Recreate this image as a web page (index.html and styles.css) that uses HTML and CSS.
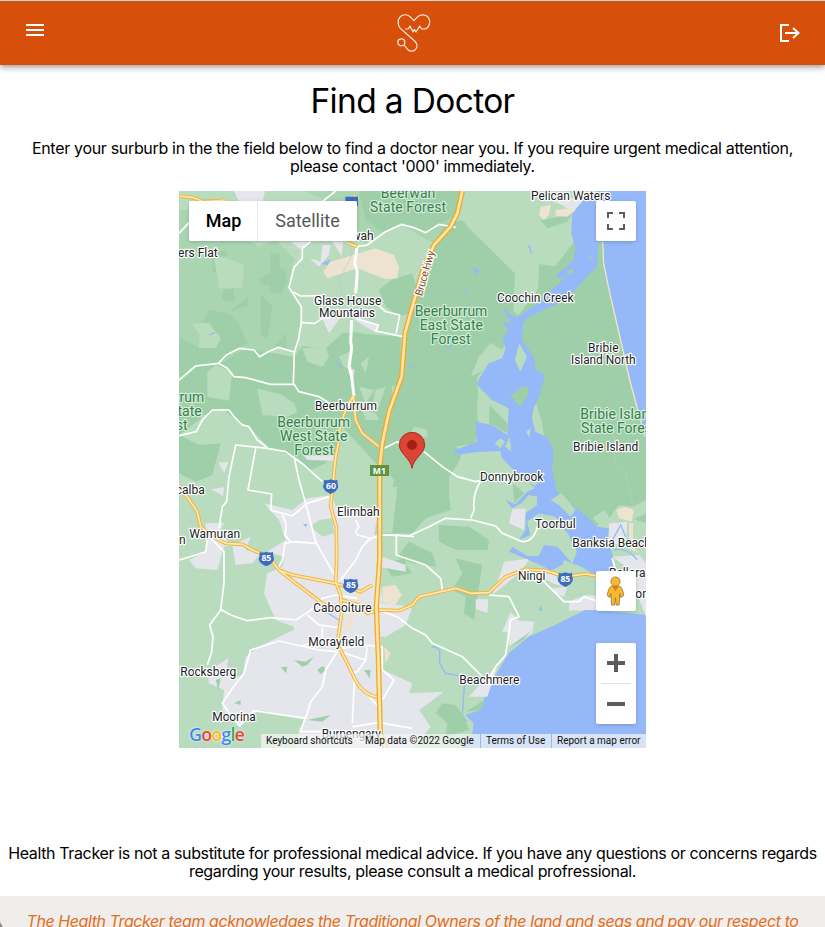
FILE: index.html
```html
<!DOCTYPE html>
<html lang="en">
<head>
<meta charset="utf-8">
<title>Health Tracker</title>
<link rel="stylesheet" href="styles.css">
</head>
<body>
<header class="bar">
  <svg class="menu" viewBox="0 0 24 24"><path d="M3 18h18v-2H3zm0-5h18v-2H3zm0-7v2h18V6z"/></svg>
  <svg class="logo" viewBox="80 40 102 120"><path d="M104 88H114L119 79L128 97L132 89L137 97L148 79L154 88H165C177 83 181 67 176 57C169 43 150 42 140 53L131 63L119 51C111 43 96 43 88 53C81 62 82 77 90 86L133 124C141 132 143 144 134 151C126 157 116 155 112 149L102 137"/><circle cx="93" cy="128" r="10.5"/></svg>
  <svg class="logout" viewBox="0 0 24 24"><path d="M11 4H3V20H11M7 12H20M15 7L20.5 12L15 17"/></svg>
</header>
<main class="main">
  <h1 class="title">Find a Doctor</h1>
  <p class="copy intro">Enter your surburb in the the field below to find a doctor near you. If you require urgent medical attention,<br>please contact '000' immediately.</p>
  <section class="map">
    <svg class="canvas" viewBox="0 3 1401 1671">
      <!-- forest -->
      <g class="forest2">
        <path d="M0 60H135L165 130L240 170L290 150L345 205L328 292L366 350L358 480L345 485L297 472L242 498L198 476L118 520L50 528L0 568Z"/>
        <path d="M380 3H850L830 75L770 160L745 150L665 103L610 125L560 160L530 150L450 40Z"/>
      </g>
      <g class="forest">
        <path d="M540 3H850L835 70L790 100L745 122L665 103L610 125L560 90Z"/>
        <path d="M0 440L60 473L110 475L125 445L90 400L70 395L90 360L150 370L180 400L205 460L180 475L120 520L50 528L0 568Z"/>
        <path d="M100 190L140 180L145 235L100 250ZM275 190H302V235H315L325 280L305 310H275L270 285H245L242 265L275 250ZM245 310L280 350L265 450L245 430Z"/>
        <path d="M130 300L165 295V335L130 330ZM285 470L320 430L325 480ZM150 365L210 320L205 348Z"/>
        <path d="M0 568L50 528L120 522L200 475L345 500L370 468L440 475L490 430L520 425L560 432L665 440L665 560L605 770L600 830L480 700L470 785L440 820L395 840L350 800L270 775L210 710L105 658L0 735Z"/>
        <path d="M600 300L640 268L700 250L712 290L695 370L660 378L620 350Z"/>
        <path d="M0 735L60 765L125 760L100 855L50 875L0 850Z"/>
        <path d="M795 103L850 90L870 115L1008 250L1003 363L1040 395L990 430L970 480L895 560L900 700L890 760L830 770L850 785L840 815L810 860V915L815 960L740 985L700 1030L610 1032L645 870L605 820L608 765L665 560L698 360L740 220L770 160Z"/>
        <path d="M1080 222L1200 240L1150 285L1110 330L1060 350L1078 290Z"/>
        <path d="M1189 150L1290 150L1401 740V1000L1310 970L1250 1010L1120 920L1090 700L1000 400Z"/>
        <path d="M690 1055L760 1090L772 1130L700 1120L655 1100ZM780 1005L870 1010L930 1050L925 1080L830 1080L780 1055ZM830 1105L910 1125L900 1190L885 1290L855 1270L860 1220L820 1200L850 1150Z"/>
        <path d="M232 1467L265 1425L292 1440L288 1520L230 1520ZM325 1197L370 1205L362 1245L325 1225ZM395 970L415 965L418 990L405 995Z"/>
        <path d="M610 1120L680 1105V1125L700 1150L640 1160Z"/>
      </g>
      <g class="field">
        <path d="M105 200H135L195 225L190 295H120Z"/><path d="M40 400L90 400L125 445L110 475L60 473L62 435Z"/>
        <path d="M85 545L110 525L160 545L150 632L85 620Z"/>
        <path d="M235 595L310 615L345 640L355 665L325 680L250 675Z"/>
        <path d="M370 475L440 470L450 500L430 530L385 515ZM480 500L510 485L520 540L495 530ZM545 520L570 500L560 550ZM590 600L620 590L600 650L580 645ZM540 590L585 600L560 640ZM640 585L655 590L640 635ZM550 660L590 670L600 690L560 690ZM60 680L130 655L180 700L155 735L90 705Z"/>
        <path d="M480 770L545 795L530 860L475 870Z"/>
        <path d="M900 500L935 458L980 485L955 530L915 540L875 560ZM895 625L930 640L920 700L895 690ZM690 740L705 710L745 720V740L715 745Z"/>
        <path d="M655 890L620 895L610 1030H640Z"/>
      </g>
      <!-- built-up land -->
      <g class="urban">
        <path d="M165 3H258L250 35H180ZM335 155L395 155L365 178ZM392 205L425 215L430 165H455L450 195L420 230ZM460 155L492 155L488 198ZM425 375H490L450 430Z"/>
        <path d="M520 385L600 405L595 430L560 410ZM510 535L527 540L520 575ZM375 798L465 795L465 812L385 810ZM118 818L148 815L136 850ZM95 898L135 892L132 918ZM80 1000L135 998L120 1030L160 1065L215 1040L200 1080L245 1090L220 1120L170 1125L160 1065L135 1070L115 1140L50 1135L30 1110L80 1085Z"/>
        <path d="M255 940L340 960L385 925L460 915L470 950L600 955L585 1035L610 1100L680 1125L680 1145L600 1130L610 1240L700 1250L680 1305L620 1340L605 1340L612 1440L700 1480L690 1510L795 1505L720 1560L755 1610L702 1674H350L360 1620L380 1585L240 1560L180 1610L130 1560L135 1500L90 1480L85 1445L148 1405L140 1460L190 1460L200 1400L240 1370L300 1340L345 1320V1310L290 1290L255 1210L265 1150L310 1130L315 1100L265 1085L320 1050L300 990Z"/>
        <path d="M1000 958L1040 955L1035 1020L990 1000ZM975 1115L1055 1105L1020 1150L940 1215L965 1150ZM890 1228L928 1228L925 1268L890 1258ZM995 1265L1020 1292L1065 1295L1060 1330L990 1370L985 1325L970 1325ZM1060 1145H1120L1155 1190L1120 1180ZM1120 1195L1165 1190L1155 1220L1125 1210ZM1170 1235L1220 1215L1270 1220L1250 1260L1170 1262Z"/>
      </g>
      <path class="field" d="M395 1010L420 990L460 985L465 1030L430 1040ZM505 1110L530 1060L590 1040L595 1180L540 1190L490 1170Z"/>
      <path class="urban" d="M500 1100L550 1030L597 1035L595 1190L530 1190L485 1175Z"/>
      <g class="sand"><path d="M432 245L455 215L590 175L645 195L660 230L655 265L620 268L535 235L445 265ZM610 1190L650 1185L668 1215L645 1250L610 1235ZM528 1200L550 1200L545 1270L525 1275L520 1325L495 1315L515 1270ZM615 1370L635 1390L620 1420Z"/></g>
      <!-- water -->
      <g class="water">
        <path d="M1254 3H1401V745L1352 570L1276 250L1268 155Z"/>
        <path d="M1180 60L1215 30L1270 3V150L1255 230L1219 265L1189 300L1139 340L1049 380L1032 400L1029 450L1064 500L1069 540L1098 555L1082 615L1064 655L1059 685L1069 725L1109 745L1124 785L1119 835L1134 905L1179 945L1219 975L1254 1010L1290 1015L1285 1055L1300 1090L1310 1170L1255 1160L1210 1132L1155 1110L1150 1125L1115 1142L1095 1130L1045 1108L990 1085L1000 1070L1045 1098L1078 1098L1095 1065L1135 1070L1180 1120L1194 1085L1169 1035L1129 980L1079 970L1044 995L1054 1035L1020 1050L1040 1020V970L1074 945V920L1049 915L1029 938L999 955L980 930L1009 943L1044 905L1069 895L1029 865L1009 845L969 805L964 783L889 787L824 795L829 780L894 755L889 695L939 705L985 735L989 655L939 630L894 585L900 568L929 520L969 505L980 475L970 450L988 420L969 395L999 400L984 380L970 345L990 370L1014 385L1039 365L1079 340L1119 300L1159 265L1129 260L1184 210L1189 175L1177 130Z"/>
        <path d="M1260 1260L1219 1260L1139 1300L1049 1340L989 1390L959 1440L934 1480L914 1530L904 1560L859 1575L884 1600L880 1630L849 1674H1401V1275Z"/>
        <path d="M878 228L905 245L890 252ZM886 250L897 280L930 305L970 345L925 300L900 285ZM425 222L457 207L445 225ZM335 205L380 232L355 218ZM420 1437L437 1430L432 1448ZM372 1002L386 1002L380 1012ZM1080 1262L1085 1245L1090 1262ZM1118 410L1125 390L1122 408Z"/>
      </g>
      <g class="creek"><path d="M758 1373Q765 1365 782 1380V1420L800 1450L858 1460L850 1575L862 1595M1050 165L1057 190M1138 245L1150 285M1110 308L1170 260M440 1265L480 1290M90 435L108 427M470 515L492 535M855 305L865 298M685 525L705 535M800 471H822"/></g>
      <g class="forest"><path d="M1164 243L1180 235L1185 245L1170 255ZM1230 205L1238 195L1242 206Z"/></g>
      <g class="field"><path d="M1021 460L1044 500L1024 545L1008 510ZM947 760L965 745L978 755L964 775ZM978 770L992 740L997 785ZM1042 725L1055 715L1050 745ZM1040 875L1080 870L1070 888ZM860 1570L915 1530L905 1560ZM1115 930L1130 920L1148 910L1190 960L1175 980L1140 945Z"/></g>
      <g class="forest"><path d="M993 618L1020 600L1025 590L1050 590L1045 620L1023 650ZM1002 880L1035 910L1005 940ZM790 1540L830 1545L855 1580L870 1620L800 1640L805 1600L770 1570ZM1180 70L1165 95L1105 115L1085 90L1140 80ZM555 1440L575 1440L572 1465ZM305 1432L325 1430L322 1450ZM345 1410L380 1415L405 1400L385 1425L370 1430ZM415 1440L430 1428L440 1440L425 1453ZM165 1540L185 1530V1545ZM110 1470L125 1465L118 1500ZM385 1590L455 1575L430 1595ZM860 1565L915 1530L905 1560ZM985 1375L1060 1320L1030 1350ZM932 645L985 700L985 730L930 700Z"/></g>
      <g class="urban"><path d="M1110 30L1220 20L1180 70L1150 45ZM1290 1000L1345 995L1340 1065L1290 1060ZM1300 1100L1380 1095L1401 1120V1280L1375 1215L1355 1140ZM870 1520L915 1470L955 1430L925 1520Z"/></g>
      <path class="field" d="M1240 985L1275 960L1290 980L1270 1010ZM1300 970L1320 945L1360 950L1401 930V970L1370 985L1345 995L1290 1000Z"/>
      <path class="sand" d="M1312 960L1335 950L1365 960L1358 995L1320 985ZM1350 1000H1362V1070L1380 1090L1350 1075ZM1085 50L1115 45L1110 75L1095 90L1080 75ZM1130 60L1175 55L1190 60L1165 80L1130 78Z"/>
      <path class="creek" d="M1300 1050L1325 1005L1340 1040M1305 1080Q1345 1070 1375 1110"/>
      <path class="forest" d="M1258 155L1271 155L1274 220L1254 230Z"/>
      <path class="beach" d="M1271 155L1274 220L1288 290L1352 570L1398 740"/>
      <!-- local roads -->
      <g class="road">
        <path d="M0 570L50 528L118 520L142 495L182 475L225 480L242 500L265 487L298 472L346 486"/>
        <path d="M118 520L145 535L165 560L200 563L275 583L343 583M395 155L370 175V205L345 232L330 293L367 350V398L358 450L346 486L343 580L360 605L420 620L460 645"/>
        <path d="M340 305L365 318L430 317M367 398L407 400L430 385L455 383M570 322L620 365L662 375L652 430M530 385L598 405L590 423L673 440M535 170L565 165L620 125L668 103L702 112L740 128L780 103L830 112M0 130L30 98M470 3L430 35"/>
        <path d="M0 737L52 725L70 690L100 660L150 660L165 680L190 705L210 710L235 750L265 772"/>
        <path d="M130 950L143 935L150 860L170 765L265 775L320 785L375 825L430 875M230 775L207 900L278 912L275 960L340 978L385 940L450 920M345 800L360 870L380 940L410 1055L480 1180M310 975L322 1005L318 1035L335 1055L410 1060L345 1055L318 1060L310 1110L295 1140M120 1015L130 950M0 1110L50 1095L80 1085L85 1050M530 990L540 1010L530 1025L535 1035L575 1045L550 1070L530 1110L485 1170M560 1055L600 1035L655 1035L705 1040M652 1037V1095L680 1105L740 1125L785 1165L790 1200"/>
        <path d="M90 1040L135 1085V1180L125 1260L92 1305L102 1340L98 1385L85 1425M125 1258L155 1275L205 1292L275 1283L350 1290L390 1265L430 1225L470 1215L535 1225M385 1275L420 1305L475 1312M430 1310V1345L370 1368"/>
        <path d="M180 1610L225 1562L380 1585L395 1535L430 1490L440 1440L475 1385L420 1380L300 1353L215 1380L195 1450L160 1495L130 1540L165 1590L185 1610M475 1383L560 1410L535 1445L515 1450M527 1455L520 1600M490 1375L560 1365L610 1370L610 1440L645 1470L610 1530M570 1520L598 1550M520 1610L600 1598L700 1615M560 1410L565 1365M380 1578L365 1625L440 1625"/>
        <path d="M615 775L655 755L690 775M735 785L790 830L835 860L890 875L907 870Q880 910 885 960L875 985M612 1035L690 1038L750 1010L800 985L880 990L950 1008L970 1030L1030 1055Q1065 1055 1075 1010M610 1265L655 1280L700 1315L740 1335L760 1360L850 1400L910 1460M930 1215L990 1220L1020 1280L995 1290L980 1395L950 1430L930 1465M1090 1170L1155 1235L1200 1235L1215 1220L1260 1235M1299 1105L1310 1140L1355 1150"/>
        <path class="wide" d="M535 165L527 220L535 245L530 310M518 390L515 455L518 475L510 530L518 560L525 620"/>
      </g>
      <g class="rail"><path d="M520 160L515 205L480 270L490 320M1305 720L1308 830L1338 840L1360 940"/></g>
      <!-- highways -->
      <g class="casing">
        <path id="hw1" d="M0 18L40 22L75 35L140 30M525 15L535 40M505 158L535 170"/>
        <path id="hw2" d="M523 617Q480 690 482 740L470 800L465 850L455 950L472 1010L473 1110L470 1175L485 1215L488 1270L475 1360L500 1410L520 1450Q545 1515 600 1522M523 620L530 690L550 730L600 770M0 885L55 965L65 1010L100 1040L140 1060L190 1063L225 1082L270 1100L300 1140L340 1155L470 1180L545 1205L580 1185M300 1140L350 1180L430 1240L480 1265M490 1230L540 1245L565 1270L600 1260L660 1262L700 1245L720 1220L830 1195L875 1210L930 1208L980 1160L1040 1138L1100 1142L1160 1160L1220 1152L1280 1162"/>
      </g>
      <g class="highway">
        <path d="M0 18L40 22L75 35L140 30M525 15L535 40M505 158L535 170"/>
        <path d="M523 617Q480 690 482 740L470 800L465 850L455 950L472 1010L473 1110L470 1175L485 1215L488 1270L475 1360L500 1410L520 1450Q545 1515 600 1522M523 620L530 690L550 730L600 770M0 885L55 965L65 1010L100 1040L140 1060L190 1063L225 1082L270 1100L300 1140L340 1155L470 1180L545 1205L580 1185M300 1140L350 1180L430 1240L480 1265M490 1230L540 1245L565 1270L600 1260L660 1262L700 1245L720 1220L830 1195L875 1210L930 1208L980 1160L1040 1138L1100 1142L1160 1160L1220 1152L1280 1162"/>
      </g>
      <path class="mcasing" d="M850 3L835 70L815 110L765 165L735 230L700 350L678 430L668 560L630 665L610 760L602 830V1110L592 1250L598 1400L604 1630L620 1674"/>
      <path class="motorway" d="M850 3L835 70L815 110L765 165L735 230L700 350L678 430L668 560L630 665L610 760L602 830V1110L592 1250L598 1400L604 1630L620 1674"/>
      <!-- shields -->
      <g class="shield">
        <path d="M499 20H537V47L518 58L499 47Z"/><path id="s" d="M435 869Q445 873 455 868Q466 873 475 869Q475 882 478 889Q477 903 455 912Q433 903 432 889Q436 882 435 869Z"/>
        <use href="#s" x="-193" y="217"/><use href="#s" x="60" y="298"/><use href="#s" x="704" y="279"/>
      </g>
      <path class="m1" d="M573 825H630V858H573Z"/>
      <g class="num"><text x="456" y="897">60</text><text x="262" y="1113">85</text><text x="516" y="1194">85</text><text x="1159" y="1175">85</text><text x="601" y="852">M1</text></g>
      <!-- place names -->
      <g class="park">
        <text x="687" y="23" textLength="164">Beerwah</text><text x="687" y="65" textLength="228">State Forest</text>
        <text x="816" y="378" textLength="218">Beerburrum</text><text x="817" y="420" textLength="190">East State</text><text x="815" y="462" textLength="119">Forest</text>
        <text x="404" y="711" textLength="218">Beerburrum</text><text x="404" y="753" textLength="202">West State</text><text x="405" y="795" textLength="119">Forest</text>
        <text x="76" y="636" class="end">rrum</text><text x="68" y="678" class="end">tate</text><text x="26" y="720" class="end">st</text>
        <text x="1204" y="686" class="start">Bribie Islan</text><text x="1206" y="728" class="start">State Fores</text>
      </g>
      <g class="town">
        <text x="1175" y="30" textLength="238">Pelican Waters</text><text x="584" y="151" class="end">wah</text><text x="116" y="201" class="end">ers Flat</text>
        <text x="506" y="345" textLength="202">Glass House</text><text x="504" y="382" textLength="168">Mountains</text>
        <text x="1069" y="336" textLength="230">Coochin Creek</text><text x="1273" y="486" textLength="92">Bribie</text><text x="1273" y="523" textLength="194">Island North</text>
        <text x="501" y="660" textLength="186">Beerburrum</text><text x="1280" y="783" textLength="196">Bribie Island</text><text x="998" y="874" textLength="190">Donnybrook</text>
        <text x="77" y="912" class="end">calba</text><text x="107" y="1044" textLength="153">Wamuran</text><text x="20" y="1062" class="end">n</text>
        <text x="538" y="978" textLength="128">Elimbah</text><text x="1129" y="1014" textLength="122">Toorbul</text><text x="1180" y="1072" class="start">Banksia Beach</text>
        <text x="1058" y="1170" textLength="82">Ningi</text><text x="490" y="1266" textLength="175">Caboolture</text><text x="472" y="1368" textLength="168">Morayfield</text>
        <text x="88" y="1459" textLength="168">Rocksberg</text><text x="165" y="1593" textLength="130">Moorina</text><text x="931" y="1482" textLength="180">Beachmere</text><text x="517" y="1643" textLength="178">Burpengary</text>
        <text x="1290" y="1162" class="start">Bellara</text><text x="1369" y="1224" class="start">on</text>
      </g>
      <text class="hwy" transform="translate(748 252) rotate(-74)" textLength="140">Bruce Hwy</text>
      <!-- marker -->
      <path class="pin" d="M699 835C695 805 661 790 661 765A38 38 0 0 1 737 765C737 790 703 805 699 835Z"/><circle class="dot" cx="699" cy="765" r="15"/>
    </svg>
    <div class="types"><button class="type on">Map</button><button class="type">Satellite</button></div>
    <button class="ctl full"><svg viewBox="0 0 18 18"><path d="M0 0V6H2V2H6V0ZM12 0V2H16V6H18V0ZM0 12V18H6V16H2V12ZM16 12V16H12V18H18V12Z"/></svg></button>
    <button class="ctl peg"><svg viewBox="0 0 52 90"><path class="body" d="M14 30H38Q48 34 51 59L42 65L39 53L37 88H28L26 65L23 88H14L12 53L9 65L1 59Q4 34 14 30Z"/><path class="scarf" d="M16 30H36L26 46Z"/><circle class="body" cx="26" cy="16" r="14"/></svg></button>
    <div class="zoom"><button class="step"><svg viewBox="0 0 18 18"><path d="M7 0H11V7H18V11H11V18H7V11H0V7H7Z"/></svg></button><button class="step"><svg viewBox="0 0 18 18"><path d="M0 7H18V11H0Z"/></svg></button></div>
    <div class="google"><span class="b">G</span><span class="r">o</span><span class="y">o</span><span class="b">g</span><span class="g">l</span><span class="r">e</span></div>
    <div class="legal"><span class="keys">Keyboard shortcuts</span><span class="data">Map data ©2022 Google</span><span class="terms">Terms of Use</span><span class="report">Report a map error</span></div>
  </section>
  <p class="copy note">Health Tracker is not a substitute for professional medical advice. If you have any questions or concerns regards<br>regarding your results, please consult a medical profressional.</p>
</main>
<footer class="foot"><p class="ack">The Health Tracker team acknowledges the Traditional Owners of the land and seas and pay our respect to</p></footer>
</body>
</html>
```
FILE: styles.css
```css
* { box-sizing: border-box; }
body { margin: 0; height: 927px; overflow: hidden; background: #fff; color: #000; font-family: Inter, "Liberation Sans", sans-serif; border-top: 1px solid #d4d4d4; display: flex; flex-direction: column; }
.bar { height: 64px; flex: none; background: #d6500c; display: grid; grid-template-columns: 1fr 34px 1fr; padding: 0 23px; box-shadow: 0 2px 4px -1px rgba(0,0,0,.2), 0 4px 5px rgba(0,0,0,.14), 0 1px 10px rgba(0,0,0,.12); }
.menu { width: 24px; height: 24px; margin-top: 17px; fill: #fff; }
.logo { width: 34px; height: 40px; margin: 12px 0 0 1px; fill: none; stroke: #ffe9dc; stroke-width: 3.6; stroke-linejoin: round; }
.logout { width: 24px; height: 24px; margin-top: 20px; justify-self: end; fill: none; stroke: #fff; stroke-width: 2; }
.main { height: 831px; flex: none; display: flex; flex-direction: column; align-items: center; }
.title { margin: 15px 0 0; font-size: 33.5px; line-height: 42px; font-weight: 400; letter-spacing: -.65px; white-space: nowrap; }
.copy { margin: 0; font-size: 16px; line-height: 18px; text-align: center; letter-spacing: -.32px; white-space: nowrap; }
.intro { margin-top: 17px; height: 52px; }
.map { position: relative; width: 467px; height: 557px; flex: none; overflow: hidden; background: #b9dcbf; font-family: Roboto, sans-serif; }
.note { margin-top: 96px; letter-spacing: -.365px; }
.foot { flex: 1; background: linear-gradient(60deg, #8a8a8a 2px, transparent 3px) 0 100% / 4px 5px no-repeat, #f0eeec; overflow: hidden; }
.ack { margin: 16px 0 0; text-align: center; color: #df701f; font-size: 16px; line-height: 19px; font-style: italic; letter-spacing: -.425px; white-space: nowrap; }

.canvas { display: block; width: 467px; height: 557px; }
.forest { fill: #9fcfa8; }
.forest2 { fill: #a9d5b1; }
.field { fill: #b9dcbf; }
.urban { fill: #e5e6eb; }
.sand { fill: #ede3d0; }
.water { fill: #95b8f8; }
.creek { fill: none; stroke: #95b8f8; stroke-width: 4; }
.beach { fill: none; stroke: #f2e4c4; stroke-width: 4; }
.road { fill: none; stroke: #fff; stroke-width: 5; stroke-linejoin: round; }
.wide { stroke-width: 9; }
.rail { fill: none; stroke: #b9ccc4; stroke-width: 2; }
.casing { fill: none; stroke: #f0b440; stroke-width: 11; stroke-linejoin: round; }
.highway { fill: none; stroke: #ffe8b0; stroke-width: 5; stroke-linejoin: round; }
.mcasing { fill: none; stroke: #edaa31; stroke-width: 16; stroke-linejoin: round; }
.motorway { fill: none; stroke: #ffe5a4; stroke-width: 8; stroke-linejoin: round; }
.shield { fill: #3c6bc4; }
.m1 { fill: #60933f; }
.num { fill: #fff; font: bold 26px "Open Sans", sans-serif; text-anchor: middle; }
.park, .town { text-anchor: middle; paint-order: stroke; stroke-linejoin: round; stroke: #fff; }
.park { font-size: 42px; fill: #33804a; stroke-width: 7; stroke: #d6edda; }
.town { font-size: 36px; fill: #202124; stroke-width: 7; }
.end { text-anchor: end; }
.start { text-anchor: start; }
.hwy { font-size: 32px; fill: #7b4a18; text-anchor: middle; paint-order: stroke; stroke: #fff; stroke-width: 7; }
.pin { fill: #dc4433; stroke: #b5281d; stroke-width: 3; }
.dot { fill: #a32015; }

button { border: 0; padding: 0; background: #fff; font-family: inherit; display: flex; align-items: center; justify-content: center; }
.types, .ctl, .zoom { position: absolute; background: #fff; border-radius: 2px; box-shadow: 0 1px 4px -1px rgba(0,0,0,.3); }
.types { left: 10px; top: 10px; width: 168px; height: 40px; display: flex; overflow: hidden; }
.type { width: 99px; height: 40px; padding-bottom: 2px; font-size: 18px; color: #565656; }
.on { width: 69px; padding-left: 1px; font-weight: 500; color: #000; border-right: 1px solid #e9e9e9; }
.ctl { left: 417px; width: 40px; height: 40px; }
.full { top: 10px; }
.full svg, .step svg { width: 18px; height: 18px; fill: #5c5c5c; }
.peg { top: 380px; }
.peg svg { width: 17px; height: 30px; overflow: visible; margin-right: 1px; }
.body { fill: #fbb829; stroke: #8f7446; stroke-width: 2.5; }
.scarf { fill: #e07424; }
.zoom { left: 417px; top: 452px; width: 40px; height: 81px; padding: 0 5px; }
.step { width: 30px; height: 40px; }
.step + .step { height: 41px; border-top: 1px solid #e3e3e3; }
.google { position: absolute; left: 10px; top: 532px; font: 600 18px/22px "Open Sans", sans-serif; letter-spacing: -.9px; text-shadow: 0 0 1px #fff, 0 0 2px #fff; }
.b { color: #4285f4; } .r { color: #ea4335; } .y { color: #fbbc05; } .g { color: #34a853; }
.legal { position: absolute; left: 82px; right: 0; bottom: 0; height: 14px; display: flex; font-size: 10px; line-height: 14px; white-space: nowrap; color: #111; }
.legal span { background: rgba(245,245,245,.7); padding-left: 5px; }
.keys { width: 99px; } .data { width: 120px; } .terms { width: 70px; margin-right: 1px; } .report { flex: 1; }
.legal .data { margin-right: 1px; }
```
